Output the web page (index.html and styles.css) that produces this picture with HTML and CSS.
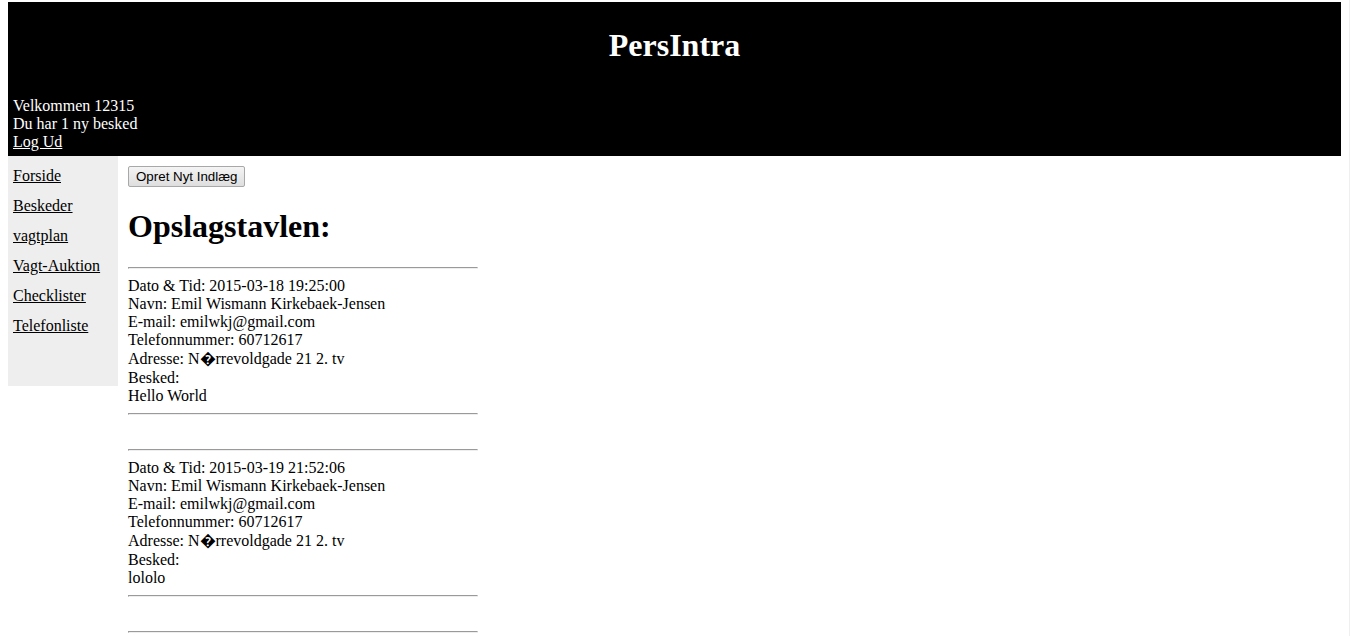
FILE: index.html
```html
<!DOCTYPE html>
<html lang="da">
<head>
    <meta charset="UTF-8">
    <title>PersIntra</title>
    <link rel="stylesheet" href="styles.css">
</head>
<body>

    <div class="header">
        <h1>PersIntra</h1>
        Velkommen 12315<br>
        Du har 1 ny besked<br>
        <a href="#">Log Ud</a>
    </div>

    <div class="wrapper">
        <div class="menu">
            <a href="#">Forside</a>
            <a href="#">Beskeder</a>
            <a href="#">vagtplan</a>
            <a href="#">Vagt-Auktion</a>
            <a href="#">Checklister</a>
            <a href="#">Telefonliste</a>
        </div>

        <div class="content">
            <button type="button">Opret Nyt Indlæg</button>
            <h1>Opslagstavlen:</h1>

            <hr>
            <div class="opslag">
                Dato &amp; Tid: 2015-03-18 19:25:00<br>
                Navn: Emil Wismann Kirkebaek-Jensen<br>
                E-mail: emilwkj@gmail.com<br>
                Telefonnummer: 60712617<br>
                <span class="adresse">Adresse: N&#xFFFD;rrevoldgade 21 2. tv</span><br>
                Besked:<br>
                Hello World
            </div>
            <hr>
            <br>

            <hr>
            <div class="opslag">
                Dato &amp; Tid: 2015-03-19 21:52:06<br>
                Navn: Emil Wismann Kirkebaek-Jensen<br>
                E-mail: emilwkj@gmail.com<br>
                Telefonnummer: 60712617<br>
                <span class="adresse">Adresse: N&#xFFFD;rrevoldgade 21 2. tv</span><br>
                Besked:<br>
                lololo
            </div>
            <hr>
            <br>

            <hr>
        </div>
    </div>

</body>
</html>
```

FILE: styles.css
```css
html {
    border-right: 1px solid #efefef;
    min-height: 100%;
}

body {
    font-family: 'Liberation Serif', 'Times New Roman', serif;
    font-size: 16px;
    margin: 2px 8px 0 8px;
    color: #000;
}

.header {
    background-color: #000;
    color: #fff;
    padding: 5px;
}

.header h1 {
    text-align: center;
    font-size: 32px;
    margin: 20px 0 33px;
}

.header a {
    color: #fff;
}

.wrapper {
    display: flex;
    align-items: flex-start;
}

.menu {
    width: 110px;
    height: 230px;
    box-sizing: border-box;
    padding: 5px 5px 0;
    background-color: #eeeeee;
    flex-shrink: 0;
}

.menu a {
    display: block;
    line-height: 30px;
    color: #000;
}

.content {
    padding: 10px;
}

.content button {
    font-family: 'Liberation Sans', Arial, sans-serif;
    font-size: 13.33px;
    padding: 1px 7px;
    color: #000;
    background: linear-gradient(#f4f4f4, #dedede);
    border: 1px solid #a8a8a8;
    border-radius: 2px;
    height: 21px;
}

.content h1 {
    font-size: 32px;
    margin: 0.67em 0;
}

.content hr {
    width: 348px;
    margin: 8px 0;
    border-style: solid;
    border-width: 1px;
    border-color: #9a9a9a #eeeeee #eeeeee #9a9a9a;
}

.adresse {
    line-height: 20px;
    vertical-align: 1px;
}
```
